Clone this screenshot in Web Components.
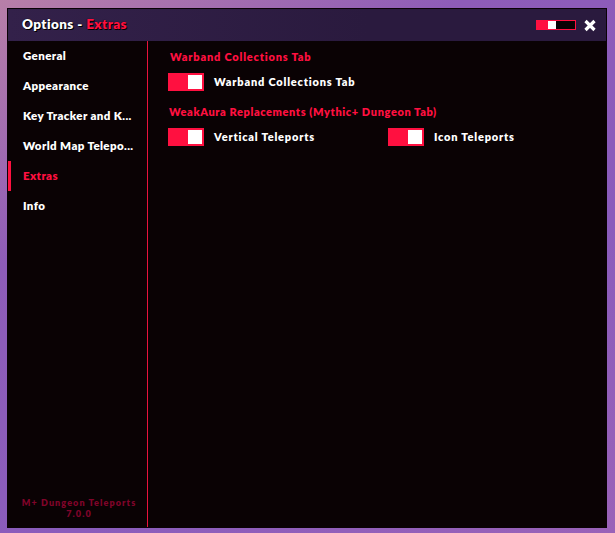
<!DOCTYPE html>
<html>
<head>
<meta charset="utf-8">
<style>
  html, body { margin: 0; height: 100%; }
  body {
    width: 615px; height: 533px; overflow: hidden; box-sizing: border-box;
    padding: 8px 8px 5px 7px;
    background: linear-gradient(150deg, #b87fa8 0%, #8e5cb8 30%, #8a5cbc 65%, #9a62b8 100%);
    font-family: Lato, sans-serif;
  }
</style>
</head>
<body>
<options-window>
  <nav-item slot="nav">General</nav-item>
  <nav-item slot="nav">Appearance</nav-item>
  <nav-item slot="nav">Key Tracker and K...</nav-item>
  <nav-item slot="nav">World Map Telepo...</nav-item>
  <nav-item slot="nav" active>Extras</nav-item>
  <nav-item slot="nav">Info</nav-item>
  <span slot="footer">M+ Dungeon Teleports<br>7.0.0</span>

  <section-title inset>Warband Collections Tab</section-title>
  <toggle-row>
    <toggle-option>Warband Collections Tab</toggle-option>
  </toggle-row>
  <section-title>WeakAura Replacements (Mythic+ Dungeon Tab)</section-title>
  <toggle-row>
    <toggle-option>Vertical Teleports</toggle-option>
    <toggle-option>Icon Teleports</toggle-option>
  </toggle-row>
</options-window>

<script>
  const define = (name, html) => {
    customElements.define(name, class extends HTMLElement {
      constructor() {
        super();
        this.attachShadow({ mode: 'open' }).innerHTML = html;
      }
    });
  };

  define('options-window', `
    <style>
      :host { display: flex; flex-direction: column; box-sizing: border-box;
        width: 600px; height: 520px; border: 1px solid #0a0206; background: #0a0204; color: #fff; }
      header { display: flex; align-items: center; height: 32px; flex: none; padding: 0 10px 0 14px;
        background: linear-gradient(90deg, #33214a, #2a1a3e 60%); }
      h1 { margin: 0; font: 800 13.5px/1 Lato, sans-serif; letter-spacing: .4px; flex: 1; color: #fff;
        text-shadow: 0 0 1px #000, 1px 1px 0 #000; }
      h1 b { color: #ff1040; font-weight: 800; }
      .close { margin-left: 8px; width: 12px; height: 13px; display: block; }
      .body { flex: 1; display: flex; min-height: 0; }
      aside { width: 139px; flex: none; display: flex; flex-direction: column; border-right: 1px solid #e8123c; }
      .nav { flex: 1; display: flex; flex-direction: column; }
      .foot { text-align: center; font: 800 9px/11px Lato, sans-serif; letter-spacing: 1.1px; color: #80042a;
        padding: 0 0 8px 3px; }
      main { flex: 1; padding: 9px 20px; }
    </style>
    <header>
      <h1>Options - <b>Extras</b></h1>
      <switch-box></switch-box>
      <svg class="close" viewBox="0 0 12 13"><path d="M1.5 2 10.5 11M10.5 2 1.5 11" stroke="#fff" stroke-width="3.2" fill="none"/></svg>
    </header>
    <div class="body">
      <aside>
        <div class="nav"><slot name="nav"></slot></div>
        <div class="foot"><slot name="footer"></slot></div>
      </aside>
      <main><slot></slot></main>
    </div>`);

  define('switch-box', `
    <style>
      :host { display: flex; width: 40px; height: 10px; box-sizing: border-box; border: 1px solid #ff1040; background: #0a0204; }
      i { display: block; height: 100%; }
      .on { width: 11px; background: #ff1040; }
      .knob { width: 8px; background: #fff; }
    </style>
    <i class="on"></i><i class="knob"></i>`);

  define('nav-item', `
    <style>
      :host { display: flex; align-items: center; height: 30px; box-sizing: border-box; padding-left: 15px;
        font: 800 11.5px/1 Lato, sans-serif; letter-spacing: .38px; color: #fff; white-space: nowrap; }
      :host([active]) { color: #ff1040; border-left: 3px solid #ff1040; padding-left: 12px; }
    </style>
    <slot></slot>`);

  define('section-title', `
    <style>
      :host { display: block; height: 14px; margin-bottom: 9px; padding-left: 1px;
        font: 800 11px/14px Lato, sans-serif; letter-spacing: .6px; color: #ff1040; white-space: nowrap; }
      :host([inset]) { padding-left: 2px; letter-spacing: .8px; }
    </style>
    <slot></slot>`);

  define('toggle-row', `
    <style>
      :host { display: grid; grid-template-columns: 220px 220px; margin-bottom: 14px; }
    </style>
    <slot></slot>`);

  define('toggle-option', `
    <style>
      :host { display: flex; align-items: center; gap: 10px; height: 18px;
        font: 800 11px/1 Lato, sans-serif; letter-spacing: .8px; color: #fff; white-space: nowrap; }
      .track { display: block; width: 36px; height: 18px; box-sizing: border-box; flex: none;
        background: #ff1040; padding: 2px 2px 2px 20px; }
      .track i { display: block; width: 14px; height: 14px; background: #fff; }
      .text { margin-top: -2px; }
    </style>
    <span class="track"><i></i></span><span class="text"><slot></slot></span>`);
</script>
</body>
</html>
